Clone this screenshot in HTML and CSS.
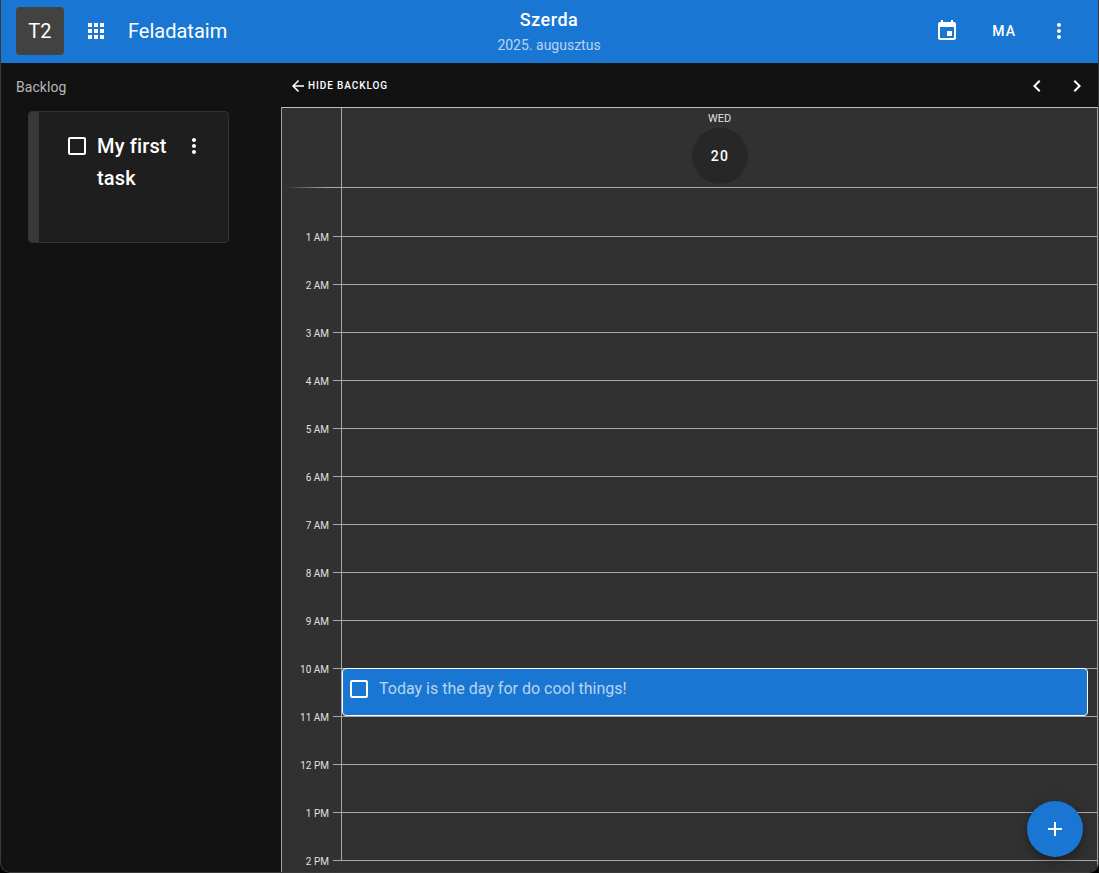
FILE: index.html
```html
<!DOCTYPE html>
<html lang="hu">
<head>
<meta charset="utf-8">
<title>Feladataim</title>
<link rel="stylesheet" href="styles.css">
</head>
<body>
<div class="app">
  <header class="topbar">
    <div class="top-left">
      <div class="avatar">T2</div>
      <svg class="icon apps" viewBox="0 0 24 24"><path d="M4 8h4V4H4v4zm6 12h4v-4h-4v4zm-6 0h4v-4H4v4zm0-6h4v-4H4v4zm6 0h4v-4h-4v4zm6-10v4h4V4h-4zm-6 4h4V4h-4v4zm6 6h4v-4h-4v4zm0 6h4v-4h-4v4z"/></svg>
      <div class="app-title">Feladataim</div>
    </div>
    <div class="top-center">
      <div class="day-name">Szerda</div>
      <div class="month-name">2025. augusztus</div>
    </div>
    <div class="top-right">
      <svg class="icon event" viewBox="0 0 24 24"><path d="M17 12h-5v5h5v-5zM16 1v2H8V1H6v2H5c-1.11 0-1.99.9-1.99 2L3 19c0 1.1.89 2 2 2h14c1.1 0 2-.9 2-2V5c0-1.1-.9-2-2-2h-1V1h-2zm3 18H5V8h14v11z"/></svg>
      <div class="today">MA</div>
      <svg class="icon more" viewBox="0 0 24 24"><path d="M12 8c1.1 0 2-.9 2-2s-.9-2-2-2-2 .9-2 2 .9 2 2 2zm0 2c-1.1 0-2 .9-2 2s.9 2 2 2 2-.9 2-2-.9-2-2-2zm0 6c-1.1 0-2 .9-2 2s.9 2 2 2 2-.9 2-2-.9-2-2-2z"/></svg>
    </div>
  </header>
  <main class="content">
    <aside class="backlog">
      <div class="backlog-title">Backlog</div>
      <div class="task-card">
        <div class="task-strip"></div>
        <div class="task-body">
          <span class="checkbox"></span>
          <div class="task-name">My first task</div>
          <svg class="icon task-more" viewBox="0 0 24 24"><path d="M12 8c1.1 0 2-.9 2-2s-.9-2-2-2-2 .9-2 2 .9 2 2 2zm0 2c-1.1 0-2 .9-2 2s.9 2 2 2 2-.9 2-2-.9-2-2-2zm0 6c-1.1 0-2 .9-2 2s.9 2 2 2 2-.9 2-2-.9-2-2-2z"/></svg>
        </div>
      </div>
    </aside>
    <section class="calendar">
      <div class="cal-toolbar">
        <div class="hide-backlog">
          <svg class="icon arrow" viewBox="0 0 24 24"><path d="M20 11H7.83l5.59-5.59L12 4l-8 8 8 8 1.41-1.41L7.83 13H20v-2z"/></svg>
          <span>HIDE BACKLOG</span>
        </div>
        <div class="pager">
          <svg class="icon chev" viewBox="0 0 24 24"><path d="M15.41 7.41 14 6l-6 6 6 6 1.41-1.41L10.83 12z"/></svg>
          <svg class="icon chev" viewBox="0 0 24 24"><path d="M10 6 8.59 7.41 13.17 12l-4.58 4.59L10 18l6-6z"/></svg>
        </div>
      </div>
      <div class="grid">
        <div class="grid-head">
          <div class="corner"></div>
          <div class="head-day">
            <div class="dow">WED</div>
            <div class="date-circle">20</div>
          </div>
        </div>
        <div class="rows">
          <div class="row"><div class="time"><span>1 AM</span></div><div class="slot"></div></div>
          <div class="row"><div class="time"><span>2 AM</span></div><div class="slot"></div></div>
          <div class="row"><div class="time"><span>3 AM</span></div><div class="slot"></div></div>
          <div class="row"><div class="time"><span>4 AM</span></div><div class="slot"></div></div>
          <div class="row"><div class="time"><span>5 AM</span></div><div class="slot"></div></div>
          <div class="row"><div class="time"><span>6 AM</span></div><div class="slot"></div></div>
          <div class="row"><div class="time"><span>7 AM</span></div><div class="slot"></div></div>
          <div class="row"><div class="time"><span>8 AM</span></div><div class="slot"></div></div>
          <div class="row"><div class="time"><span>9 AM</span></div><div class="slot"></div></div>
          <div class="row"><div class="time"><span>10 AM</span></div><div class="slot"></div></div>
          <div class="row"><div class="time"><span>11 AM</span></div><div class="slot"></div></div>
          <div class="row"><div class="time"><span>12 PM</span></div><div class="slot"></div></div>
          <div class="row"><div class="time"><span>1 PM</span></div><div class="slot"></div></div>
          <div class="row"><div class="time"><span>2 PM</span></div><div class="slot"></div></div>
          <div class="event-card">
            <span class="checkbox event-check"></span>
            <span class="event-text">Today is the day for do cool things!</span>
          </div>
        </div>
      </div>
    </section>
  </main>
  <button class="fab" type="button">
    <svg class="icon plus" viewBox="0 0 24 24"><path d="M19 13h-6v6h-2v-6H5v-2h6V5h2v6h6v2z"/></svg>
  </button>
</div>
</body>
</html>
```
FILE: styles.css
```css
* { box-sizing: border-box; }
html, body { margin: 0; height: 100%; background: #000; overflow: hidden; }
body { font-family: Roboto, "Liberation Sans", sans-serif; color: #fff; }
.app {
  position: relative;
  width: 1099px;
  height: 873px;
  background: #121212;
  border-left: 1px solid #3a3a3a;
  border-right: 1px solid #3a3a3a;
  border-bottom: 1px solid #3a3a3a;
  border-radius: 0 0 10px 10px;
  overflow: hidden;
  display: flex;
  flex-direction: column;
}
.icon { display: block; fill: #fff; flex: none; }

.topbar {
  height: 63px;
  flex: none;
  margin: 0 -1px;
  background: #1976d2;
  display: flex;
  align-items: center;
  padding: 0 16px 1px;
  position: relative;
}
.top-left { display: flex; align-items: center; }
.avatar {
  width: 48px; height: 48px;
  background: #424242;
  border-radius: 4px;
  display: flex; align-items: center; justify-content: center;
  font-size: 20px; letter-spacing: 0.2px;
  margin-right: 20px;
}
.apps { width: 24px; height: 24px; }
.app-title { font-size: 20px; margin-left: 20px; }
.top-center {
  position: absolute; left: 0; right: 0; top: 8px;
  text-align: center;
  padding-right: 1px;
}
.day-name { font-size: 18px; font-weight: 500; line-height: 24px; letter-spacing: 0.5px; }
.month-name { font-size: 14px; line-height: 24px; margin-top: 1px; color: rgba(255,255,255,.7); }
.top-right { margin-left: auto; margin-right: 12px; display: flex; align-items: center; position: relative; }
.event { width: 24px; height: 24px; margin-right: 33px; }
.today { font-size: 14px; font-weight: 500; letter-spacing: 1px; margin-right: 31px; }
.more { width: 24px; height: 24px; }

.content { flex: 1; display: flex; min-height: 0; }
.backlog { width: 280px; flex: none; padding-top: 15px; }
.backlog-title { padding-left: 15px; font-size: 14px; line-height: 18px; color: rgba(255,255,255,.7); letter-spacing: 0.05px; }
.task-card {
  margin: 15px 0 0 27px;
  width: 201px; height: 132px;
  background: #1e1e1e;
  border: 1px solid #333;
  border-radius: 4px;
  display: flex;
  overflow: hidden;
}
.task-strip { width: 10px; background: #383838; flex: none; }
.task-body { flex: 1; display: flex; align-items: flex-start; padding: 25px 0 0 29px; }
.checkbox { display: block; width: 18px; height: 18px; border: 2px solid #fff; border-radius: 2px; flex: none; }
.task-name { width: 80px; margin: -7px 0 0 11px; font-size: 20px; line-height: 32px; font-weight: 500; letter-spacing: 0.15px; }
.task-more { width: 24px; height: 24px; margin: -3px 0 0 5px; }

.calendar { flex: 1; min-width: 0; display: flex; flex-direction: column; }
.cal-toolbar { height: 44px; flex: none; display: flex; align-items: center; justify-content: space-between; padding: 0 1px 0 8px; }
.hide-backlog { display: flex; align-items: center; font-size: 10px; font-weight: 500; letter-spacing: 0.9px; margin-top: 1px; }
.arrow { width: 18px; height: 18px; margin-right: 1px; }
.pager { display: flex; gap: 16px; margin-top: 1px; margin-right: 8px; }
.chev { width: 24px; height: 24px; }

.grid { flex: 1; background: #313131; border-top: 1px solid #bdbdbd; border-left: 1px solid #9e9e9e; border-right: 1px solid #9e9e9e; overflow: hidden; }
.grid-head { display: flex; height: 80px; }
.corner {
  width: 60px; flex: none;
  border-right: 1px solid #a8a8a8;
  background: linear-gradient(to right, transparent 2px, #a8a8a8 45px) left bottom / 100% 1px no-repeat;
}
.head-day { flex: 1; display: flex; flex-direction: column; align-items: center; padding-top: 5px; border-bottom: 1px solid #a8a8a8; }
.dow { font-size: 11px; line-height: 12px; color: rgba(255,255,255,.87); }
.date-circle {
  width: 56px; height: 56px; margin-top: 3px;
  border-radius: 50%;
  background: #272727;
  display: flex; align-items: center; justify-content: center;
  font-size: 14px; font-weight: 500; letter-spacing: 1.4px;
  padding-left: 1px;
}
.rows { position: relative; }
.row { display: flex; height: 48px; }
.row:first-child { height: 49px; }
.time {
  width: 60px; flex: none;
  border-right: 1px solid #a8a8a8;
  display: flex; align-items: flex-end; justify-content: flex-end;
  padding-right: 12px;
  position: relative;
}
.time::after { content: ""; position: absolute; right: 0; bottom: 0; width: 8px; height: 1px; background: #a8a8a8; }
.time span { font-size: 10px; line-height: 12px; margin-bottom: -7px; color: rgba(255,255,255,.87); }
.slot { flex: 1; border-bottom: 1px solid #a8a8a8; }

.event-card {
  position: absolute;
  left: 60px; top: 480px;
  width: 746px; height: 48px;
  background: #1976d2;
  border: 1px solid #fff;
  border-radius: 4px;
  display: flex; align-items: flex-start;
  padding: 11px 0 0 7px;
}
.event-text { margin-left: 11px; font-size: 16px; line-height: 18px; color: rgba(255,255,255,.7); }

.fab {
  position: absolute;
  left: 1026px; top: 801px;
  width: 56px; height: 56px;
  border: 0; padding: 0;
  border-radius: 50%;
  background: #1976d2;
  box-shadow: 0 3px 5px -1px rgba(0,0,0,.2), 0 6px 10px rgba(0,0,0,.14), 0 1px 18px rgba(0,0,0,.12);
  display: flex; align-items: center; justify-content: center;
}
.plus { width: 24px; height: 24px; }
```
